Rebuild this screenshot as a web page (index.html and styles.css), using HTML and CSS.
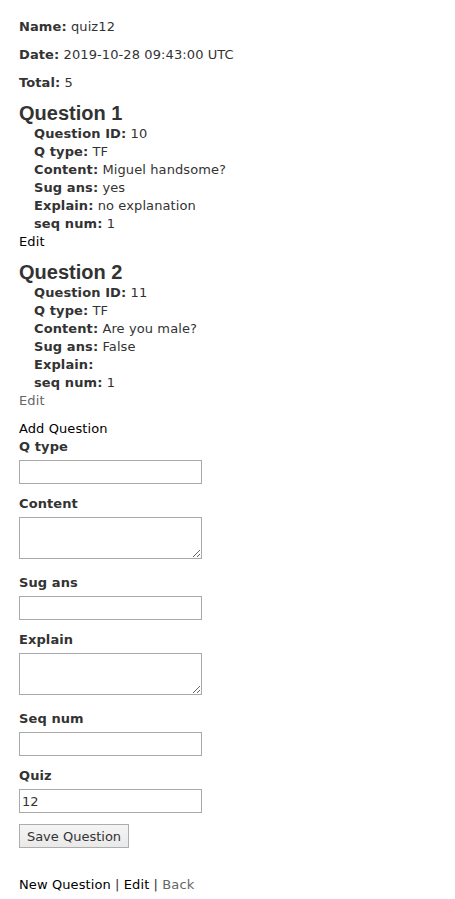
FILE: index.html
```html
<!DOCTYPE html>
<html>
<head>
<meta charset="utf-8">
<title>Quiz</title>
<link rel="stylesheet" href="styles.css">
</head>
<body>
<p class="meta"><strong>Name:</strong> quiz12</p>
<p class="meta"><strong>Date:</strong> 2019-10-28 09:43:00 UTC</p>
<p class="meta"><strong>Total:</strong> 5</p>

<section class="question">
  <h2 class="question-title">Question 1</h2>
  <div class="details">
    <div><strong>Question ID:</strong> 10</div>
    <div><strong>Q type:</strong> TF</div>
    <div><strong>Content:</strong> Miguel handsome?</div>
    <div><strong>Sug ans:</strong> yes</div>
    <div><strong>Explain:</strong> no explanation</div>
    <div><strong>seq num:</strong> 1</div>
  </div>
  <a class="link" href="#">Edit</a>
</section>

<section class="question">
  <h2 class="question-title">Question 2</h2>
  <div class="details">
    <div><strong>Question ID:</strong> 11</div>
    <div><strong>Q type:</strong> TF</div>
    <div><strong>Content:</strong> Are you male?</div>
    <div><strong>Sug ans:</strong> False</div>
    <div><strong>Explain:</strong> </div>
    <div><strong>seq num:</strong> 1</div>
  </div>
  <a class="link link-visited" href="#">Edit</a>
</section>

<div class="new-question">
  <a class="link" href="#">Add Question</a>
  <form class="form">
    <div class="field">
      <label class="label">Q type</label>
      <input class="control" type="text">
    </div>
    <div class="field field-area">
      <label class="label">Content</label>
      <textarea class="control area"></textarea>
    </div>
    <div class="field">
      <label class="label">Sug ans</label>
      <input class="control" type="text">
    </div>
    <div class="field field-area">
      <label class="label">Explain</label>
      <textarea class="control area"></textarea>
    </div>
    <div class="field">
      <label class="label">Seq num</label>
      <input class="control" type="text">
    </div>
    <div class="field">
      <label class="label">Quiz</label>
      <input class="control" type="text" value="12">
    </div>
    <div class="actions">
      <button class="button" type="button">Save Question</button>
    </div>
  </form>
</div>

<p class="footer"><a class="link" href="#">New Question</a> | <a class="link" href="#">Edit</a> | <a class="link link-visited" href="#">Back</a></p>
</body>
</html>
```

FILE: styles.css
```css
html, body {
  background: #fff;
}
body {
  margin: 0;
  padding: 18px 19px 17px;
  color: #333;
  font-family: "DejaVu Sans", Verdana, sans-serif;
  font-size: 13px;
  line-height: 18px;
  letter-spacing: 0.1px;
}
strong {
  font-weight: bold;
}
.meta {
  margin: 0 0 10px;
}
.question-title {
  margin: 10px 0 0;
  font-family: "Liberation Sans", Arial, sans-serif;
  font-size: 20px;
  font-weight: bold;
  line-height: 23px;
  letter-spacing: 0;
  color: #333;
}
.details {
  padding-left: 15px;
}
.link {
  color: #000;
  text-decoration: none;
}
.link-visited {
  color: #666;
}
.new-question {
  margin-top: 10px;
}
.form {
  margin: 0;
}
.label {
  display: block;
  font-weight: bold;
}
.control {
  display: block;
  box-sizing: border-box;
  width: 183px;
  height: 24px;
  margin: 4px 0 11px;
  padding: 1px 2px;
  border: 1px solid #a9a9a9;
  border-radius: 0;
  background: #fff;
  color: #333;
  font-family: "DejaVu Sans", Verdana, sans-serif;
  font-size: 13px;
  outline: none;
}
.area {
  height: 42px;
  margin-bottom: 15px;
  resize: both;
}
.actions {
  margin-top: 10px;
}
.button {
  box-sizing: border-box;
  width: 110px;
  height: 24px;
  padding: 0 6px;
  border: 1px solid #adadad;
  border-radius: 0;
  background: linear-gradient(#f4f4f4, #e9e9e9);
  color: #333;
  font-family: "DejaVu Sans", Verdana, sans-serif;
  font-size: 13px;
}
.footer {
  margin: 28px 0 0;
}
```
